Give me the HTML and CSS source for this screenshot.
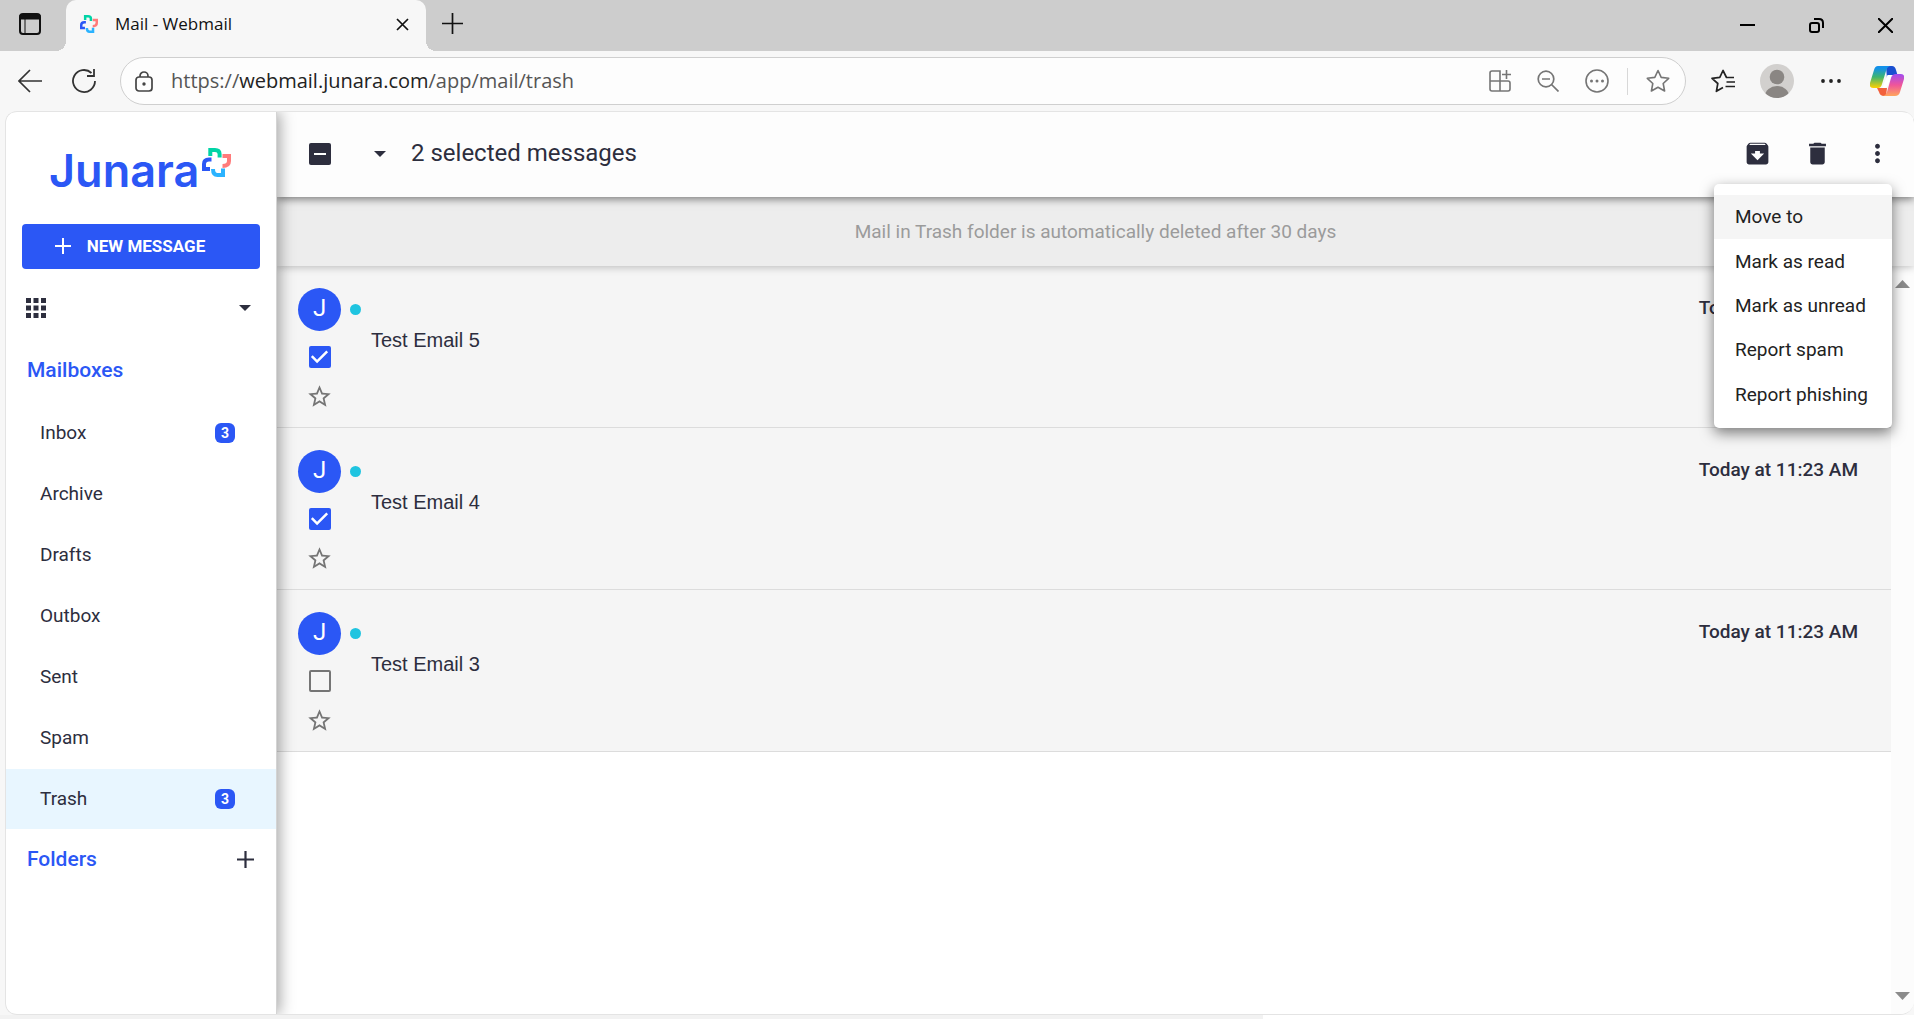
FILE: index.html
```html
<!DOCTYPE html>
<html lang="en">
<head>
    <meta charset="UTF-8">
    <title>Mail - Webmail</title>
    <link rel="stylesheet" href="styles.css">
</head>
<body>
    <!-- shared shapes -->
    <svg class="defs" aria-hidden="true">
        <defs>
            <symbol id="cross" viewBox="0 0 29 29">
                <g fill="none" stroke-width="4">
                    <path d="M8.300 8V2H13Q17.600 2 17.600 6V9.500" stroke="#00d4a6"/>
                    <path d="M20.500 8H27V13Q27 18 20.500 18" stroke="#ff7b7b"/>
                    <path d="M21 20.500V27H15.500Q11 27 11 21" stroke="#2bb3ff"/>
                    <path d="M9.500 11.500H7Q2 11.500 2 16V21H8" stroke="#2b57f5"/>
                </g>
            </symbol>
            <symbol id="star" viewBox="0 0 24 24">
                <path fill="#757575" d="M22 9.240l-7.190-.62L12 2 9.190 8.630 2 9.240l5.460 4.730L5.820 21 12 17.270 18.180 21l-1.630-7.030L22 9.240zM12 15.400l-3.760 2.270 1-4.280-3.320-2.880 4.380-.38L12 6.100l1.710 4.040 4.380.38-3.320 2.880 1 4.280L12 15.400z"/>
            </symbol>
            <linearGradient id="cool" x1="0" y1="0" x2="0" y2="1">
                <stop offset="0.100" stop-color="#1391ea"/>
                <stop offset="0.500" stop-color="#3fb56e"/>
                <stop offset="1" stop-color="#ffd000"/>
            </linearGradient>
            <linearGradient id="warm" x1="0" y1="0" x2="0" y2="1">
                <stop offset="0" stop-color="#a14cf0"/>
                <stop offset="0.500" stop-color="#f0559a"/>
                <stop offset="1" stop-color="#ffa65c"/>
            </linearGradient>
        </defs>
    </svg>

    <div class="tabbar">
        <button class="tab-actions" aria-label="Tab actions">
            <svg width="22" height="22" viewBox="0 0 22 22"><rect x="1" y="1" width="20" height="20" rx="3" fill="none" stroke="#111" stroke-width="2"/><path d="M1 2h20v4H1zM6 6v14" stroke="#111" fill="#111"/></svg>
        </button>
        <div class="tab">
            <svg width="18" height="18"><use href="#cross"/></svg>
            <span class="tab-title">Mail - Webmail</span>
            <button aria-label="Close tab">
                <svg width="13" height="13" viewBox="0 0 13 13"><path d="M1 1l11 11M12 1L1 12" stroke="#111" stroke-width="1.700"/></svg>
            </button>
        </div>
        <button class="new-tab" aria-label="New tab">
            <svg width="21" height="21" viewBox="0 0 21 21"><path d="M10.500 0v21M0 10.500h21" stroke="#111" stroke-width="1.700"/></svg>
        </button>
        <div class="window-controls">
            <button aria-label="Minimize"><svg width="15" height="15" viewBox="0 0 15 15"><path d="M0 7h15" stroke="#000" stroke-width="2"/></svg></button>
            <button aria-label="Restore"><svg width="15" height="15" viewBox="0 0 15 15"><g fill="none" stroke="#000" stroke-width="2"><rect x="1" y="5" width="9" height="9" rx="2"/><path d="M5 1h5q4 0 4 4v5"/></g></svg></button>
            <button aria-label="Close"><svg width="15" height="15" viewBox="0 0 15 15"><path d="M0 0l15 15M15 0L0 15" stroke="#000" stroke-width="2"/></svg></button>
        </div>
    </div>

    <div class="browser-bar">
        <button class="nav-btn" aria-label="Back">
            <svg width="24" height="24" viewBox="0 0 24 24"><path d="M12 1L1 12l11 11M1 12h23" fill="none" stroke="#333" stroke-width="1.700"/></svg>
        </button>
        <button class="nav-btn" aria-label="Reload">
            <svg width="24" height="24" viewBox="0 0 24 24"><path d="M19.500 4A11 11 0 1 0 23 12M22 0v7h-7" fill="none" stroke="#333" stroke-width="1.800"/></svg>
        </button>
        <div class="address">
            <svg width="18" height="21" viewBox="0 0 18 21"><g fill="none" stroke="#444" stroke-width="1.700"><rect x="1" y="6" width="16" height="14" rx="3"/><path d="M5 6V5a4 4 0 0 1 8 0v1"/></g><circle cx="9" cy="13" r="1.700" fill="#444"/></svg>
            <span class="url">https://<b>webmail.junara.com</b>/app/mail/trash</span>
            <div class="address-icons">
                <button aria-label="Apps"><svg width="22" height="22" viewBox="0 0 22 22"><path d="M1 3q0-2 2-2h8v20H3q-2 0-2-2zM1 11h18q2 0 2 2v6q0 2-2 2h-8M17.500 0v9M13 4.500h9" fill="none" stroke="#757575" stroke-width="1.600"/></svg></button>
                <button aria-label="Zoom out"><svg width="22" height="22" viewBox="0 0 22 22"><g fill="none" stroke="#757575" stroke-width="1.700"><circle cx="9" cy="9" r="7.800"/><path d="M5 9h8M14.500 14.500l7 7"/></g></svg></button>
                <button aria-label="More"><svg width="24" height="24" viewBox="0 0 24 24"><circle cx="12" cy="12" r="11" fill="none" stroke="#757575" stroke-width="1.600"/><g fill="#757575"><circle cx="6.500" cy="12" r="1.500"/><circle cx="12" cy="12" r="1.500"/><circle cx="17.500" cy="12" r="1.500"/></g></svg></button>
                <span class="divider"></span>
                <button aria-label="Favorite"><svg width="24" height="24" viewBox="0 0 24 24"><path d="M12 1.500l3.200 6.900 7.500.9-5.500 5.200 1.400 7.500-6.600-3.700-6.600 3.700 1.400-7.500-5.500-5.200 7.500-.9z" fill="none" stroke="#757575" stroke-width="1.600" stroke-linejoin="round"/></svg></button>
            </div>
        </div>
        <div class="browser-icons">
            <button aria-label="Favorites"><svg width="24" height="24" viewBox="0 0 24 24"><path d="M23 8.500h-7.500L12 1.500 8.800 8.400 1 9.300l5.800 5.200L5.400 22.300 12 18.500M15.500 13H24M14.500 17.500H24" fill="none" stroke="#222" stroke-width="1.700" stroke-linejoin="round"/></svg></button>
            <button aria-label="Profile"><svg width="34" height="34" viewBox="0 0 34 34"><clipPath id="face"><circle cx="17" cy="17" r="17"/></clipPath><g clip-path="url(#face)"><path d="M0 0h34v34H0z" fill="#d2d0ce"/><g fill="#8a8683"><circle cx="17" cy="13" r="7.300"/><ellipse cx="17" cy="32" rx="12" ry="10"/></g></g></svg></button>
            <button aria-label="Settings"><svg width="20" height="20" viewBox="0 0 20 20"><g fill="#222"><circle cx="2" cy="10" r="1.900"/><circle cx="10" cy="10" r="1.900"/><circle cx="18" cy="10" r="1.900"/></g></svg></button>
            <button aria-label="Copilot"><svg width="34" height="30" viewBox="0 0 34 30"><path d="M16 0h6q3 0 4 4l1.500 5H22q-4 0-5 4z" fill="#1a4fd0"/><path d="M7 22h10l-1 8h-2q-4 0-5-4z" fill="#f2603c"/><path d="M8 0h12q-3 1-4 5l-4 13q-1 4-4 4H3q-4 0-3-5L4 4q1-4 4-4z" fill="url(#cool)"/><path d="M26 8h5q4 0 3 5l-4 13q-1 4-5 4H13q3-1 4-4l4-14q1-4 5-4z" fill="url(#warm)"/><path d="M17.500 9H22q-1 1-1.500 3L18 19q-1 3-3 3h-3q1-1 1.500-3z" fill="#fff"/></svg></button>
        </div>
    </div>

    <div class="app">
        <aside class="sidebar">
            <a class="logo" href="#">Junara<svg width="29" height="29"><use href="#cross"/></svg></a>

            <button class="new-message">
                <svg width="16" height="16" viewBox="0 0 16 16"><path d="M8 0v16M0 8h16" stroke="#fff" stroke-width="2"/></svg>
                NEW MESSAGE
            </button>

            <button class="apps" aria-label="Apps">
                <svg width="20" height="20" viewBox="0 0 20 20"><path fill="#2d2e3e" d="M0 0h5v5H0zM7.500 0h5v5h-5zM15 0h5v5h-5zM0 7.500h5v5H0zM7.500 7.500h5v5h-5zM15 7.500h5v5h-5zM0 15h5v5H0zM7.500 15h5v5h-5zM15 15h5v5h-5z"/></svg>
                <span class="caret"></span>
            </button>

            <h2>Mailboxes</h2>
            <nav>
                <a href="#">Inbox <span class="badge">3</span></a>
                <a href="#">Archive</a>
                <a href="#">Drafts</a>
                <a href="#">Outbox</a>
                <a href="#">Sent</a>
                <a href="#">Spam</a>
                <a class="active" href="#">Trash <span class="badge">3</span></a>
            </nav>

            <div class="folders">
                <h2>Folders</h2>
                <button aria-label="Add folder">
                    <svg width="17" height="17" viewBox="0 0 17 17"><path d="M8.500 0v17M0 8.500h17" stroke="#2d2e3e" stroke-width="2.200"/></svg>
                </button>
            </div>
        </aside>

        <main>
            <div class="toolbar">
                <input type="checkbox" class="select-all" aria-label="Select all">
                <button class="select-menu" aria-label="Select options"><span class="caret"></span></button>
                <h1>2 selected messages</h1>
                <div class="actions">
                    <button aria-label="Archive"><svg width="29" height="29" viewBox="0 0 24 24"><path fill="#2d2e3e" d="M20.540 5.230l-1.390-1.680C18.880 3.210 18.470 3 18 3H6c-.47 0-.88.21-1.160.55L3.460 5.230C3.170 5.570 3 6.020 3 6.500V19c0 1.100.9 2 2 2h14c1.100 0 2-.9 2-2V6.500c0-.48-.17-.93-.46-1.270zM12 17.500L6.500 12H10v-2h4v2h3.500L12 17.500zM5.120 5l.81-1h12l.94 1H5.120z"/></svg></button>
                    <button aria-label="Delete"><svg width="29" height="29" viewBox="0 0 24 24"><path fill="#2d2e3e" d="M6 19c0 1.100.9 2 2 2h8c1.100 0 2-.9 2-2V7H6v12zM19 4h-3.500l-1-1h-5l-1 1H5v2h14V4z"/></svg></button>
                    <button aria-label="More actions"><svg width="29" height="29" viewBox="0 0 24 24"><path fill="#2d2e3e" d="M12 8c1.100 0 2-.9 2-2s-.9-2-2-2-2 .9-2 2 .9 2 2 2zm0 2c-1.100 0-2 .9-2 2s.9 2 2 2 2-.9 2-2-.9-2-2-2zm0 6c-1.100 0-2 .9-2 2s.9 2 2 2 2-.9 2-2-.9-2-2-2z"/></svg></button>
                    <div class="menu">
                        <button class="current">Move to</button>
                        <button>Mark as read</button>
                        <button>Mark as unread</button>
                        <button>Report spam</button>
                        <button>Report phishing</button>
                    </div>
                </div>
            </div>

            <p class="notice">Mail in Trash folder is automatically deleted after 30 days</p>

            <div class="list">
                <ul class="messages">
                    <li>
                        <div class="controls">
                            <span class="avatar">J</span>
                            <input type="checkbox" aria-label="Select Test Email 5" checked>
                            <button aria-label="Star"><svg width="27" height="27"><use href="#star"/></svg></button>
                        </div>
                        <span class="unread"></span>
                        <a class="subject" href="#">Test Email 5</a>
                        <time>Today at 11:23 AM</time>
                    </li>
                    <li>
                        <div class="controls">
                            <span class="avatar">J</span>
                            <input type="checkbox" aria-label="Select Test Email 4" checked>
                            <button aria-label="Star"><svg width="27" height="27"><use href="#star"/></svg></button>
                        </div>
                        <span class="unread"></span>
                        <a class="subject" href="#">Test Email 4</a>
                        <time>Today at 11:23 AM</time>
                    </li>
                    <li>
                        <div class="controls">
                            <span class="avatar">J</span>
                            <input type="checkbox" aria-label="Select Test Email 3">
                            <button aria-label="Star"><svg width="27" height="27"><use href="#star"/></svg></button>
                        </div>
                        <span class="unread"></span>
                        <a class="subject" href="#">Test Email 3</a>
                        <time>Today at 11:23 AM</time>
                    </li>
                </ul>
                <div class="scroll">
                    <svg width="15" height="8" viewBox="0 0 15 8"><path d="M0 8L7.500 0 15 8z" fill="#8b8b8b"/></svg>
                    <svg width="15" height="8" viewBox="0 0 15 8"><path d="M0 0l7.500 8L15 0z" fill="#8b8b8b"/></svg>
                </div>
            </div>
        </main>
    </div>
    <div class="bottom-edge"></div>
</body>
</html>
```
FILE: styles.css
```css
* {
    box-sizing: border-box;
}

body {
    display: flex;
    flex-direction: column;
    min-height: 100vh;
    margin: 0;
    background-color: #f7f7f7;
    color: #2d2e3e;
    font-family: Roboto, sans-serif;
    font-size: 19px;
    line-height: 24px;
}

button {
    display: flex;
    align-items: center;
    justify-content: center;
    padding: 0;
    border: none;
    background: none;
    color: inherit;
    font: inherit;
    cursor: pointer;
}

a {
    color: inherit;
    text-decoration: none;
}

svg {
    display: block;
    flex: none;
}

.defs {
    position: absolute;
    width: 0;
    height: 0;
}

/* Browser tabs */
.tabbar {
    display: flex;
    height: 51px;
    background-color: #cdcdcd;
}

.tab-actions {
    width: 66px;
    padding: 0 6px 3px 0;
}

.tab {
    position: relative;
    display: flex;
    align-items: center;
    width: 360px;
    padding: 0 17px 3px 14px;
    border-radius: 10px 10px 0 0;
    background-color: #f7f7f7;
    color: #111;
    font-family: "Open Sans", sans-serif;
    font-size: 17px;
}

.tab::before,
.tab::after {
    content: "";
    position: absolute;
    bottom: 0;
    left: -10px;
    width: 10px;
    height: 10px;
    background: radial-gradient(circle at 0 0, transparent 10px, #f7f7f7 10px);
}

.tab::after {
    left: 100%;
    background: radial-gradient(circle at 100% 0, transparent 10px, #f7f7f7 10px);
}

.tab-title {
    flex: 1;
    margin-left: 17px;
}

.new-tab {
    width: 52px;
    padding-bottom: 4px;
}

.window-controls {
    display: flex;
    gap: 54px;
    margin-left: auto;
    padding-right: 21px;
}

/* Address bar */
.browser-bar {
    display: flex;
    align-items: center;
    height: 60px;
    padding: 0 10px 0 18px;
}

.nav-btn {
    margin-right: 30px;
}

.nav-btn + .nav-btn {
    margin-right: 24px;
}

.address {
    display: flex;
    flex: 1;
    align-items: center;
    height: 48px;
    padding: 0 15px 0 14px;
    border: 1px solid #cfcfcf;
    border-radius: 24px;
    background-color: #fdfdfd;
    font-family: "Open Sans", sans-serif;
    font-size: 20px;
}

.url {
    margin-left: 18px;
    color: #555;
}

.url b {
    color: #222;
    font-weight: 400;
}

.address-icons {
    display: flex;
    align-items: center;
    gap: 26px;
    margin-left: auto;
}

.divider {
    width: 1px;
    height: 27px;
    margin: 0 -8px;
    background-color: #d8d8d8;
}

.browser-icons {
    display: flex;
    align-items: center;
    gap: 27px;
    margin-left: 25px;
}

.browser-icons button:nth-child(2) {
    margin-left: -2px;
}

.browser-icons button:last-child {
    margin-left: 2px;
}

/* Page */
.app {
    display: flex;
    flex: 1;
    margin-left: 5px;
    border: 1px solid #e4e4e4;
    border-right: none;
    border-radius: 12px 12px 14px 12px;
    background-color: #fff;
    overflow: hidden;
}

.sidebar {
    position: relative;
    z-index: 2;
    flex: none;
    width: 271px;
    border-right: 1px solid #d4d4d4;
    background-color: #fff;
    box-shadow: 3px 0 14px rgba(0, 0, 0, 0.35);
}

.logo {
    display: flex;
    margin: 31px 0 0 43px;
    color: #2b57f5;
    font-family: Inter, sans-serif;
    font-size: 45px;
    font-weight: 600;
    line-height: 56px;
}

.logo svg {
    margin: 5px 0 0 3px;
}

.new-message {
    gap: 16px;
    width: 238px;
    height: 45px;
    margin: 25px 16px 0;
    padding: 0 22px 2px 0;
    border-radius: 4px;
    background-color: #2b57f5;
    color: #fff;
    font-size: 17px;
    font-weight: 700;
}

.apps {
    justify-content: space-between;
    width: 100%;
    height: 40px;
    margin-top: 19px;
    padding: 0 25px 0 20px;
}

.caret {
    border: 6px solid transparent;
    border-top-color: #2d2e3e;
    border-bottom: none;
}

h2 {
    margin: 0;
    color: #2b57f5;
    font-size: 21px;
    font-weight: 500;
}

.sidebar > h2 {
    margin: 30px 21px 21px;
}

nav {
    display: flex;
    flex-direction: column;
    gap: 1px;
}

nav a {
    display: flex;
    align-items: center;
    justify-content: space-between;
    height: 60px;
    padding: 0 41px 0 34px;
}

nav .active {
    background-color: #e8f6ff;
}

.badge {
    width: 20px;
    height: 20px;
    border-radius: 6px;
    background-color: #2b57f5;
    color: #fff;
    font-size: 14px;
    font-weight: 700;
    line-height: 20px;
    text-align: center;
}

.folders {
    display: flex;
    align-items: center;
    justify-content: space-between;
    margin-top: 18px;
    padding: 0 22px 0 21px;
}

main {
    display: flex;
    flex: 1;
    flex-direction: column;
    min-width: 0;
}

.toolbar {
    position: relative;
    z-index: 1;
    display: flex;
    align-items: center;
    height: 85px;
    padding: 0 22px 2px 32px;
    background-color: #fdfdfd;
    box-shadow: 0 2px 8px rgba(0, 0, 0, 0.5);
}

h1 {
    margin: 0;
    padding-bottom: 2px;
    font-size: 24px;
    font-weight: 400;
}

input[type="checkbox"] {
    appearance: none;
    width: 22px;
    height: 22px;
    margin: 0;
    border: 2px solid #757575;
    border-radius: 2px;
}

input[type="checkbox"]:checked {
    border: none;
    background-color: #2b57f5;
}

input[type="checkbox"]:checked::after {
    content: "";
    display: block;
    height: 22px;
    background-color: #fff;
    clip-path: polygon(39% 78%, 11% 50%, 19% 42%, 39% 62%, 81% 20%, 89% 28%);
}

/* some, not all, messages are selected */
input.select-all {
    border: none;
    background: linear-gradient(#fff, #fff) center / 12px 2px no-repeat #2d2e3e;
}

.select-menu {
    width: 40px;
    margin: 0 11px 0 29px;
}

.actions {
    position: relative;
    display: flex;
    gap: 31px;
    margin-left: auto;
}

.menu {
    position: absolute;
    top: 45px;
    right: 0;
    display: grid;
    grid-auto-rows: 1fr;
    width: 178px;
    height: 244px;
    padding: 11px 0;
    border-radius: 5px;
    background-color: #fff;
    box-shadow: 0 5px 14px rgba(0, 0, 0, 0.5);
    color: #222;
}

.menu button {
    justify-content: flex-start;
    padding-left: 21px;
}

.menu .current {
    background-color: #f5f5f5;
}

.notice {
    position: relative;
    margin: 0;
    padding: 23px 0 22px;
    background-color: #ededed;
    box-shadow: 0 1px 8px rgba(0, 0, 0, 0.25);
    color: #9b9b9b;
    text-align: center;
}

.list {
    display: flex;
    flex: 1;
}

.messages {
    flex: 1;
    margin: 0;
    padding: 0;
    list-style: none;
}

.messages li {
    display: flex;
    align-items: flex-start;
    height: 162px;
    padding: 22px 33px 0 21px;
    border-bottom: 1px solid #dcdcdc;
    background-color: #f5f5f5;
}

.controls {
    display: flex;
    flex-direction: column;
    align-items: center;
    gap: 15px;
}

.avatar {
    width: 43px;
    height: 43px;
    border-radius: 50%;
    background-color: #2b57f5;
    color: #fff;
    font-size: 24px;
    line-height: 41px;
    text-align: center;
}

.unread {
    width: 11px;
    height: 11px;
    margin: 16px 10px 0 9px;
    border-radius: 50%;
    background-color: #1fc4e0;
}

.subject {
    flex: 1;
    margin-top: 40px;
    font-family: "Liberation Sans", sans-serif;
    font-size: 20px;
}

time {
    margin-top: 8px;
    font-weight: 500;
}

.scroll {
    display: flex;
    flex-direction: column;
    align-items: center;
    justify-content: space-between;
    width: 23px;
    padding: 14px 0;
    background-color: #fcfcfc;
}

.bottom-edge {
    height: 4px;
    background: linear-gradient(to right, #f2f2f2 66%, #fff 66%);
}
```
